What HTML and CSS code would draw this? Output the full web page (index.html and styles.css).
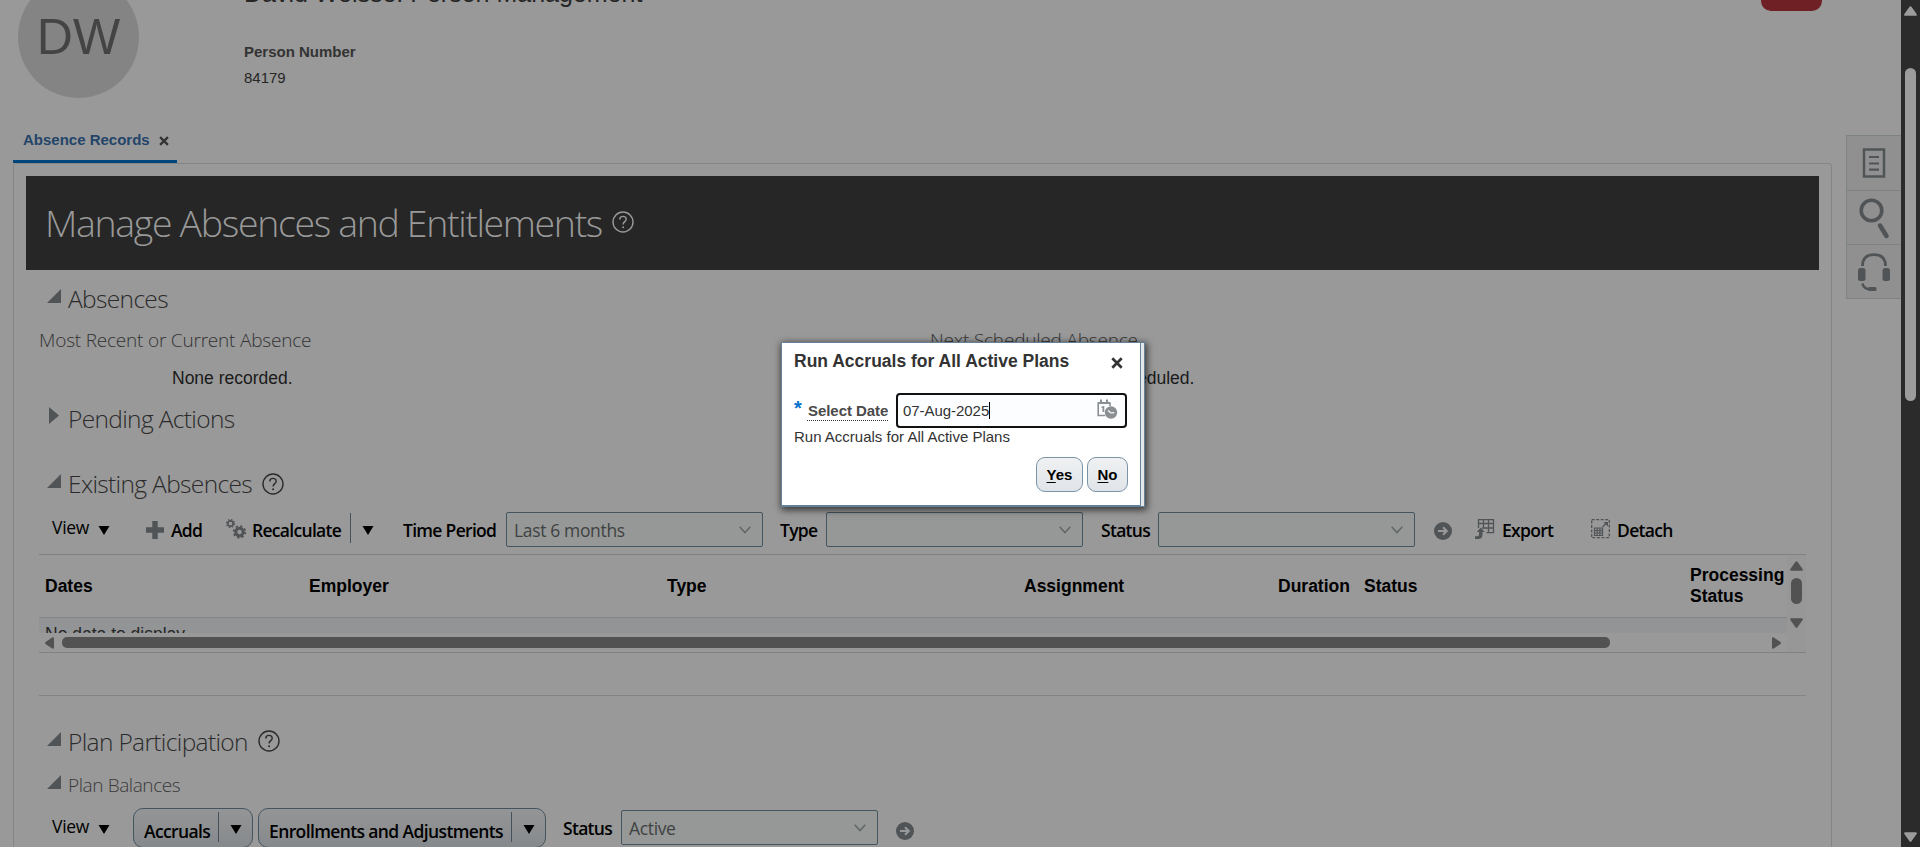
FILE: index.html
```html
<!DOCTYPE html>
<html lang="en">
<head>
<meta charset="utf-8">
<title>Manage Absences and Entitlements</title>
<link rel="stylesheet" href="styles.css">
</head>
<body>
<svg width="0" height="0" class="defs">
  <symbol id="help" viewBox="0 0 22 22"><circle cx="11" cy="11" r="10" fill="none" stroke="currentColor" stroke-width="1.4"/><path d="M7.8 8.4C7.8 6.4 9.2 5.4 11 5.4s3.2 1 3.2 2.8c0 2.4-3.1 2.5-3.1 5.2" fill="none" stroke="currentColor" stroke-width="1.4"/><circle cx="11.1" cy="16.3" r="1"/></symbol>
  <symbol id="open" viewBox="0 0 14 14"><path d="M14 0v14H0z"/></symbol>
  <symbol id="drop" viewBox="0 0 11 9"><path d="M0 0h11L5.5 9z"/></symbol>
  <symbol id="chev" viewBox="0 0 12 8"><path d="M.7.8 6 6.6 11.3.8" fill="none" stroke="currentColor" stroke-width="1.5"/></symbol>
  <symbol id="go" viewBox="0 0 18 18"><circle cx="9" cy="9" r="9"/><path d="M4 9h8M9 5.2 12.8 9 9 12.8" fill="none" stroke="#999" stroke-width="2"/></symbol>
  <symbol id="cross" viewBox="0 0 12 12"><path d="M1.3 1.3l9.4 9.4M10.7 1.3l-9.4 9.4" fill="none" stroke="currentColor" stroke-width="2.7"/></symbol>
  <symbol id="up" viewBox="0 0 13 10"><path d="M5.5.8q1-1.100 2 0L12.6 8q.8 1.800-1 1.800H1.400Q-.4 9.800.400 8z"/></symbol>
</svg>
<div class="page">
  <main class="main">
    <header class="header">
      <div class="avatar">DW</div>
      <div class="person">
        <div class="person-title">David Weisse: Person Management</div>
        <div class="person-label">Person Number</div>
        <div class="person-value">84179</div>
      </div>
      <div class="done"></div>
    </header>
    <nav class="tabs"><div class="tab">Absence Records<svg class="tab-x"><use href="#cross"/></svg></div></nav>
    <section class="panel">
      <div class="band"><h1>Manage Absences and Entitlements</h1><svg class="help"><use href="#help"/></svg></div>
      <div class="content">
        <h2 class="row absences"><svg class="tri"><use href="#open"/></svg><span>Absences</span></h2>
        <div class="split sub"><span>Most Recent or Current Absence</span><span>Next Scheduled Absence</span></div>
        <div class="split note"><span>None recorded.</span><span>None scheduled.</span></div>
        <h2 class="row pending"><svg class="tri closed" viewBox="0 0 10 17"><path d="M0 0l10 8.500L0 17z"/></svg><span>Pending Actions</span></h2>
        <h2 class="row existing"><svg class="tri"><use href="#open"/></svg><span>Existing Absences</span><svg class="help"><use href="#help"/></svg></h2>
        <div class="toolbar">
          <span class="view">View</span>
          <svg class="drop"><use href="#drop"/></svg>
          <svg class="ico" viewBox="0 0 18 18"><path d="M6.300 0h5.400v6.300H18v5.400h-6.300V18H6.300v-6.300H0V6.300h6.300z"/></svg>
          <span class="cmd">Add</span>
          <svg class="ico gears" viewBox="0 0 20 20"><g fill="none" stroke="#505456"><circle cx="4.500" cy="4.500" r="2.700" stroke-width="1.700"/><circle cx="4.500" cy="4.500" r="4" stroke-width="1.200" stroke-dasharray="1.570"/><circle cx="13.500" cy="13" r="3.700" stroke-width="3"/><circle cx="13.500" cy="13" r="5.800" stroke-width="1.800" stroke-dasharray="2.277"/></g></svg>
          <span class="cmd">Recalculate</span>
          <i class="sep"></i>
          <svg class="drop"><use href="#drop"/></svg>
          <span class="cmd">Time Period</span>
          <div class="select"><span>Last 6 months</span><svg><use href="#chev"/></svg></div>
          <span class="cmd">Type</span>
          <div class="select"><span></span><svg><use href="#chev"/></svg></div>
          <span class="cmd">Status</span>
          <div class="select"><span></span><svg><use href="#chev"/></svg></div>
          <svg class="ico go"><use href="#go"/></svg>
          <svg class="ico big" viewBox="0 0 19 20"><path d="M3.500 9V.7h15v13h-7M3.500 4.500h15M7 9h11.500M8.500.7V9M13.500.7v13" fill="none" stroke="#505456" stroke-width="1.300"/><path d="M5.700 8.500l4 4.500H7.500v2.500q0 4.500-4.500 4.500H0v-2.800h2.500q1.500 0 1.500-1.700V13H1.800z"/></svg>
          <span class="cmd">Export</span>
          <svg class="ico big" viewBox="0 0 19 20"><path d="M.7.700h17.600v18H.700z" fill="none" stroke="#505456" stroke-width="1.300" stroke-dasharray="3 1.500"/><path d="M3.500 9h8v7.500h-8zM3.500 11.500h8M3.500 14h8M6.200 9v7.500M8.900 9v7.500M11.500 8l4-4" fill="none" stroke="#505456" stroke-width="1.200"/><path d="M12.500 3H17v4.500z"/></svg>
          <span class="cmd">Detach</span>
        </div>
        <div class="table">
          <div class="grid">
            <div class="thead"><b>Dates</b><b>Employer</b><b>Type</b><b>Assignment</b><b>Duration</b><b>Status</b><b>Processing Status</b></div>
            <div class="empty">No data to display.</div>
            <div class="hscroll">
              <svg viewBox="0 0 9 12"><path d="M7.200.400Q9-.2 9 1.500v9q0 1.700-1.800 1.100L.5 7q-.8-1 0-2z"/></svg>
              <i></i>
              <svg viewBox="0 0 9 12"><path d="M1.800.400Q0-.2 0 1.500v9q0 1.700 1.800 1.100L8.500 7q.8-1 0-2z"/></svg>
            </div>
          </div>
          <div class="vscroll"><svg><use href="#up"/></svg><i></i><svg class="down"><use href="#up"/></svg></div>
        </div>
        <hr class="rule">
        <h2 class="row plan"><svg class="tri"><use href="#open"/></svg><span>Plan Participation</span><svg class="help"><use href="#help"/></svg></h2>
        <h3 class="row balances"><svg class="tri"><use href="#open"/></svg><span>Plan Balances</span></h3>
        <div class="toolbar2">
          <span class="view">View</span>
          <svg class="drop"><use href="#drop"/></svg>
          <div class="split-btn accruals"><span>Accruals</span><i class="sep"></i><svg class="drop"><use href="#drop"/></svg></div>
          <div class="split-btn enroll"><span>Enrollments and Adjustments</span><i class="sep"></i><svg class="drop"><use href="#drop"/></svg></div>
          <span class="cmd">Status</span>
          <div class="select"><span>Active</span><svg><use href="#chev"/></svg></div>
          <svg class="ico go"><use href="#go"/></svg>
        </div>
      </div>
    </section>
  </main>
  <aside class="rail">
    <div><svg width="24" height="30" viewBox="0 0 24 30"><g fill="none" stroke="#505456"><path d="M2 1.500h20v27H2z" stroke-width="2.500"/><path d="M7 9h10M7 15.500h10M7 21.700h10" stroke-width="2.200"/></g></svg></div>
    <div><svg width="30" height="40" viewBox="0 0 30 40"><circle cx="12.500" cy="12.500" r="10.300" fill="none" stroke="#505456" stroke-width="3.600"/><path d="M21 27.500l6.500 10.500" stroke="#505456" stroke-width="4.500" stroke-linecap="round"/></svg></div>
    <div><svg width="34" height="38" viewBox="0 0 34 38"><path d="M5.500 13C5.500 5 10 1.700 17 1.700S28.500 5 28.500 13" fill="none" stroke="#505456" stroke-width="2.800"/><rect x="1" y="15" width="7.500" height="13" rx="2.500"/><rect x="25.500" y="15" width="7.500" height="13" rx="2.500"/><path d="M5.500 30.500q.8 5 6.500 5.700" fill="none" stroke="#505456" stroke-width="2.500"/><rect x="11" y="34" width="8.500" height="4" rx="1.500"/></svg></div>
  </aside>
  <div class="scrollbar"><svg><use href="#up"/></svg><i></i><svg class="down"><use href="#up"/></svg></div>
</div>
<div class="dialog" role="dialog">
  <div class="dialog-body">
    <div class="dialog-head"><strong>Run Accruals for All Active Plans</strong><svg><use href="#cross"/></svg></div>
    <div class="field">
      <span class="star">*</span><label>Select Date</label>
      <div class="input"><span>07-Aug-2025</span><i></i>
        <svg width="21" height="20" viewBox="0 0 21 20"><path d="M8 16.500H1.200V4H13v3" fill="none" stroke="#8b8f92" stroke-width="1.600"/><path d="M1 3h12v2H1zM3 .5h2V4H3zM9 .5h2V4H9zM4.300 8l2-1h1v6H5.500V8.800H4.300z" fill="#8b8f92"/><circle cx="14" cy="13.500" r="6.200" fill="#8b8f92"/><path d="M11 11.500l3 2.500 3.200-.3" fill="none" stroke="#fff" stroke-width="1.200"/></svg>
      </div>
    </div>
    <p class="hint">Run Accruals for All Active Plans</p>
    <div class="actions"><button class="yes"><u>Y</u>es</button><button class="no"><u>N</u>o</button></div>
  </div>
</div>
</body>
</html>
```
FILE: styles.css
```css
* { box-sizing: border-box; }
body {
  margin: 0;
  width: 1920px;
  height: 847px;
  overflow: hidden;
  background: #999;
  color: #000;
  font-family: "Liberation Sans", Arial, sans-serif;
}
svg { display: block; flex: none; fill: currentColor; overflow: visible; }
.defs { position: absolute; }
h1, h2, h3, p { margin: 0; font-weight: 300; }
span, b, strong, label { white-space: nowrap; }

.page { display: flex; height: 847px; overflow: hidden; }
.main { width: 1846px; height: 847px; flex: none; overflow: hidden; }

.header { display: flex; height: 119px; padding-left: 18px; }
.avatar {
  width: 121px;
  height: 122px;
  margin-top: -24px;
  border-radius: 50%;
  background: #848484;
  color: #444;
  font-size: 50px;
  line-height: 122px;
  text-align: center;
}
.person { margin-left: 105px; color: #262626; font-size: 15px; line-height: 26px; }
.person-title { margin: -17px 0 36px; font-size: 25px; line-height: 20px; white-space: nowrap; }
.person-label { color: #333; font-weight: 700; }
.done { width: 61px; height: 11px; margin: 0 24px 0 auto; border-radius: 0 0 10px 10px; background: #6e2024; }

.tabs { height: 44px; padding-left: 13px; display: flex; }
.tab {
  display: flex;
  align-items: center;
  width: 164px;
  padding-left: 10px;
  border-bottom: 3px solid #00467c;
  color: #24456a;
  font-size: 15px;
  font-weight: 700;
  white-space: nowrap;
}
.tab-x { width: 10px; height: 10px; margin: 2px 0 0 9px; color: #333; }

.panel {
  width: 1819px;
  height: 700px;
  margin-left: 13px;
  padding: 12px 12px 0;
  border: 1px solid #838587;
  border-radius: 3px;
}
.band { display: flex; align-items: center; width: 1793px; height: 94px; padding-left: 19px; background: #262626; color: #999; }
.band h1 { width: 567px; font: 300 37.5px/92px "Open Sans", sans-serif; letter-spacing: -1.35px; white-space: nowrap; }
.band .help { margin-top: -2px; }
.help { width: 22px; height: 22px; }
.content { padding-left: 13px; }

.row { display: flex; align-items: center; padding-left: 8px; color: #2b2b2b; font-family: "Open Sans", sans-serif; font-size: 24.5px; letter-spacing: -0.65px; }
.row span { padding-left: 7px; }
.row .help { margin-left: 10px; }
.tri { width: 14px; height: 14px; margin-bottom: 5px; color: #505456; }
.closed { width: 10px; height: 17px; margin: 0 2px 5px; }
.absences { height: 56px; }
.pending { height: 32px; }
.existing { height: 57px; margin-top: 21px; }
.rule { width: 1767px; height: 1px; margin: 42px 0 0; border: 0; background: #828486; }
.plan { height: 52px; margin-top: 19px; }
.balances { height: 35px; font-size: 19px; letter-spacing: -0.4px; color: #3a3a3a; }

.split { display: grid; grid-template-columns: 891px 1fr; }
.sub { height: 28px; color: #333; font: 300 19px/29px "Open Sans", sans-serif; letter-spacing: -0.2px; }
.note { height: 48px; padding-left: 133px; color: #1a1a1a; font-size: 17.5px; line-height: 48px; }

.toolbar {
  display: grid;
  grid-template-columns: 46px 48px 25px 55px 26px 98px 12px 41px 103px 274px 46px 275px 57px 276px 41px 27px 89px 26px 80px;
  align-items: center;
  height: 35px;
  padding-left: 13px;
}
.view, .cmd, .select, .split-btn { font-family: "Open Sans", sans-serif; font-size: 17.5px; }
.view { padding-bottom: 5px; letter-spacing: -0.3px; }
.cmd { font-weight: 600; letter-spacing: -0.7px; }
.drop { width: 12px; height: 9px; }
.toolbar .drop { margin-top: 2px; }
.ico { width: 18px; height: 18px; color: #505456; }
.big { width: 19px; height: 20px; margin-top: -2px; }
.gears { width: 20px; height: 20px; margin-top: -2px; }
.go { margin-top: 3px; }
.sep { display: block; width: 1px; height: 30px; background: #45525e; }
.toolbar .sep { margin-top: -3px; }
.select {
  display: flex;
  align-items: center;
  justify-content: space-between;
  width: 257px;
  height: 35px;
  padding: 0 11px 0 7px;
  border: 1px solid #455560;
  border-radius: 2px;
  background: #959897;
  color: #404242;
  letter-spacing: -0.35px;
}
.select svg { width: 12px; height: 8px; color: #626667; }

.table { display: flex; width: 1767px; height: 99px; margin-top: 7px; border: solid #7e8286; border-width: 1px 0; }
.grid { width: 1748px; }
.thead {
  display: grid;
  grid-template-columns: 264px 358px 357px 254px 86px 326px 97px;
  align-items: center;
  height: 63px;
  padding-left: 6px;
  border-bottom: 1px solid #828486;
  font-size: 17.5px;
  line-height: 21px;
}
.thead b:last-child { white-space: normal; }
.empty { height: 15px; padding: 6px 0 0 6px; overflow: hidden; background: #929496; color: #262626; font-size: 17.5px; line-height: 20px; }
.hscroll { display: flex; align-items: center; height: 19px; padding-left: 6px; color: #525252; }
.hscroll svg { width: 9px; height: 12px; }
.hscroll i { width: 1548px; height: 11px; margin: 0 162px 0 8px; border-radius: 5px; background: #525252; }
.vscroll { width: 19px; padding: 6px 3px 0; background: #979797; color: #525252; }
.vscroll svg, .scrollbar svg { width: 13px; height: 10px; }
.vscroll i { display: block; width: 11px; height: 26px; margin: 7px 1px 14px; border-radius: 6px; background: #525252; }
.down { transform: scaleY(-1); }

.toolbar2 {
  display: grid;
  grid-template-columns: 46px 35px 125px 305px 58px 275px 18px;
  align-items: center;
  height: 40px;
  margin-top: 6px;
  padding-left: 13px;
}
.toolbar2 .view { padding-bottom: 5px; }
.toolbar2 > .drop { margin-top: 3px; }
.toolbar2 .select { margin-bottom: 1px; }
.toolbar2 .cmd { padding-bottom: 1px; }
.toolbar2 .go { margin-top: 5px; }
.split-btn {
  display: flex;
  align-items: center;
  height: 40px;
  border: 1px solid #455560;
  border-radius: 10px;
  background: linear-gradient(#949596, #86898c);
  font-weight: 600;
  letter-spacing: -0.62px;
}
.split-btn span { padding: 6px 0 0 10px; }
.split-btn .sep { margin: -2px 11px 0 auto; }
.split-btn .drop { margin: 3px 10px 0 0; }
.accruals { width: 120px; }
.enroll { width: 288px; }

.rail { width: 55px; flex: none; padding-top: 135px; color: #505456; }
.rail div { display: flex; align-items: center; justify-content: center; height: 55px; border: solid #7d8285; border-width: 1px 0 0 1px; background: #909090; }
.rail div + div { height: 54px; }
.rail div:last-child { height: 55px; border-bottom-width: 1px; }
.scrollbar { width: 19px; height: 847px; flex: none; padding: 6px 3px 0; background: #2b2b2b; color: #9c9c9c; }
.scrollbar i { display: block; width: 11px; height: 333px; margin: 52px 1px 431px; border-radius: 6px; background: #9c9c9c; }

.dialog {
  position: absolute;
  left: 781px;
  top: 342px;
  width: 364px;
  height: 165px;
  padding-right: 3px;
  border: 1px solid #65819a;
  background: #e3e7ea;
  box-shadow: 1px 2px 7px 1px rgba(0, 0, 0, .65);
  color: #333;
  font-size: 15px;
}
.dialog-body { height: 163px; padding: 0 12px; border-right: 1px solid #65819a; border-bottom: 1px solid #65819a; background: #fff; }
.dialog-head { display: flex; justify-content: space-between; align-items: center; height: 37px; padding-right: 5px; font-size: 17.5px; }
.dialog-head svg { width: 12px; height: 12px; margin-top: 2px; }
.field { display: flex; align-items: center; height: 35px; margin-top: 13px; }
.star { width: 13px; margin-top: -6px; color: #0572ce; font-size: 20px; font-weight: 700; line-height: 20px; }
.field label { width: 81px; padding-left: 1px; margin: 2px 8px 0 0; border-bottom: 1px dotted #333; color: #4a4a4a; font-weight: 700; line-height: 18px; letter-spacing: -0.05px; }
.input { display: flex; align-items: center; width: 231px; height: 35px; padding: 0 7px 3px 5px; border: 2px solid #111; border-radius: 4px; background: #fcfdff; }
.input span { padding-top: 3px; letter-spacing: -0.05px; }
.input i { width: 1px; height: 17px; margin: 3px auto 0 0; background: #000; }
.hint { height: 18px; line-height: 18px; white-space: nowrap; }
.actions { display: flex; justify-content: flex-end; gap: 4px; margin-top: 11px; }
button { height: 35px; padding: 0; border: 1px solid #7b93a7; border-radius: 9px; background: linear-gradient(#eff1f3, #e0e4e8); color: #000; font: 700 15px "Liberation Sans", Arial, sans-serif; }
button u { text-underline-offset: 2px; }
.yes { width: 47px; }
.no { width: 41px; }
```
